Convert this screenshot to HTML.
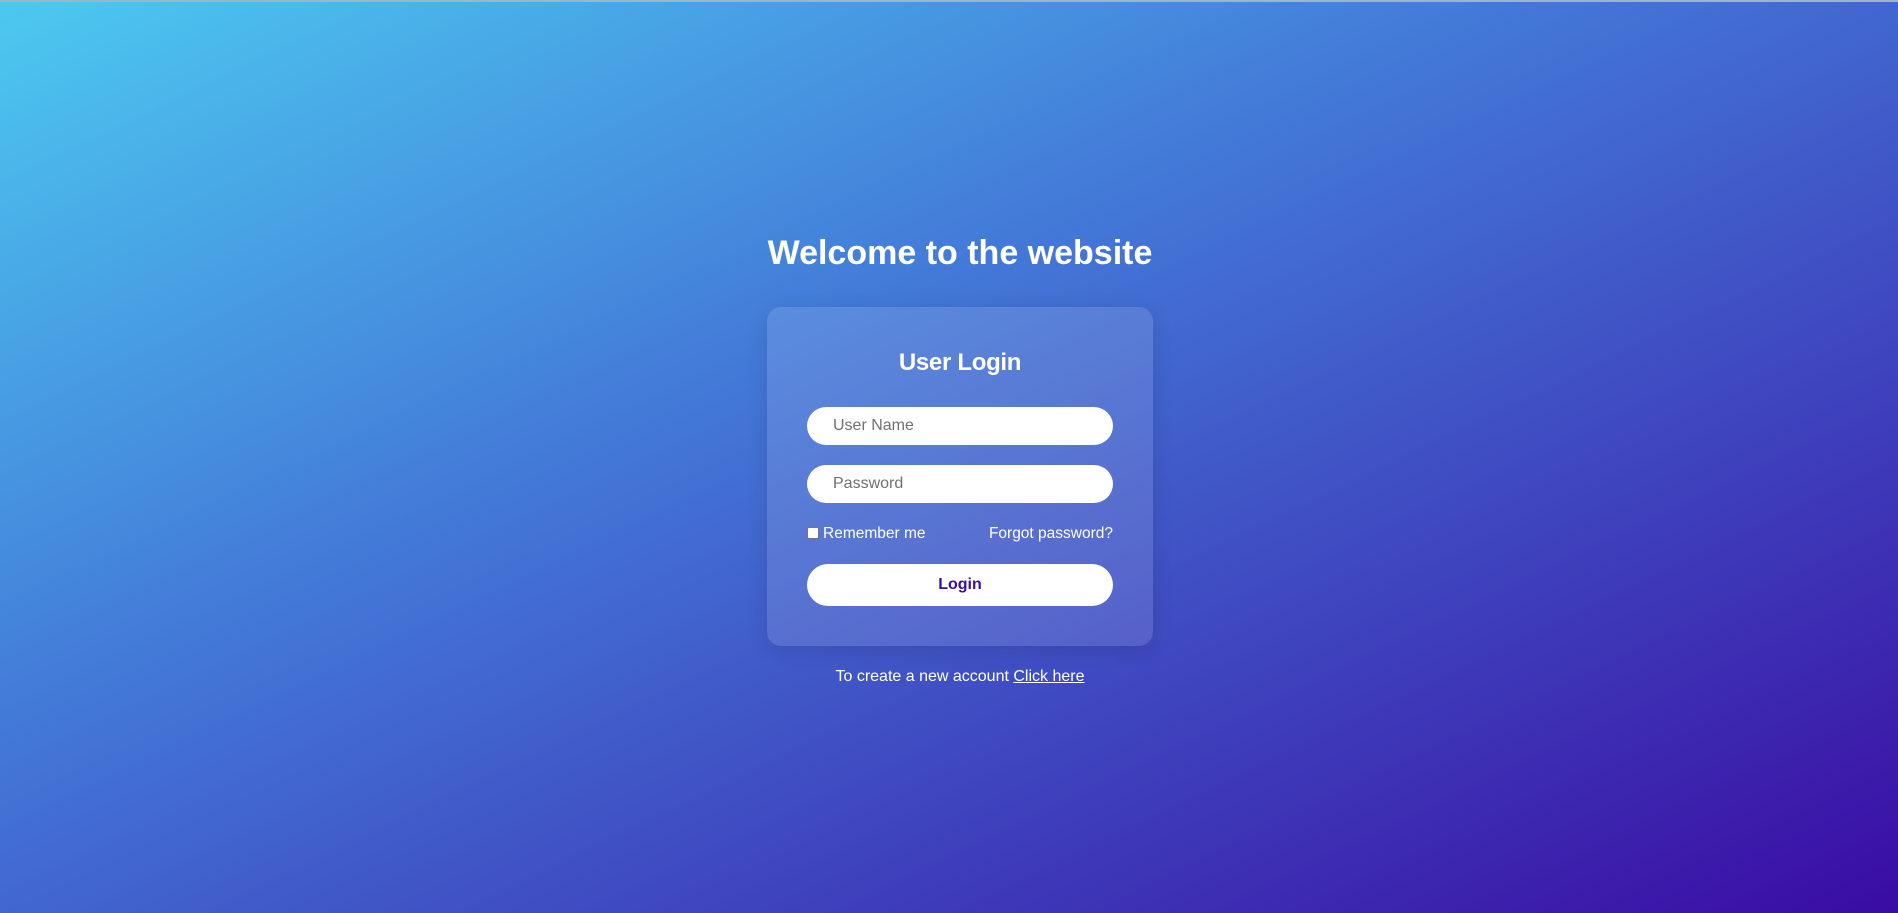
<!DOCTYPE html>
<html><head><meta charset="utf-8"><style>
html,body{margin:0;padding:0;width:1898px;height:913px;overflow:hidden}
body{background:linear-gradient(to bottom right,#4cc9f0,#4379d8 40%,#3a0ca3);border-top:2px solid #9ab8c4;box-sizing:border-box;font-family:"Liberation Sans",sans-serif;position:relative;color:#fff}
h1{position:absolute;left:700px;width:520px;top:232px;margin:0;text-align:center;font-size:34px;font-weight:bold;letter-spacing:0px}
.card{position:absolute;left:767px;top:305px;width:386px;height:339px;border-radius:14px;background:rgba(255,255,255,0.12);box-shadow:0 4px 20px rgba(0,0,0,0.12)}
h2{position:absolute;left:0;right:0;top:42px;margin:0;text-align:center;font-size:24px;font-weight:bold;letter-spacing:-0.3px}
.in{position:absolute;left:40px;width:306px;height:38px;border-radius:19px;background:#fff;color:#707070;font-size:16px;line-height:38px;box-sizing:border-box;padding-left:26px}
.row{position:absolute;left:40px;width:306px;top:217px;font-size:15.5px;height:20px;line-height:20px}
.cb{display:inline-block;width:12px;height:12px;background:#fff;border-radius:2px;border:1px solid #777;box-sizing:border-box;vertical-align:-1px;margin-right:4px}
.btn{position:absolute;left:40px;width:306px;top:257px;height:42px;border-radius:21px;background:#fff;color:#3a0ca3;font-weight:bold;font-size:16px;line-height:42px;text-align:center}
.foot{position:absolute;left:700px;width:520px;top:666px;text-align:center;font-size:16px}
.foot u{text-decoration:underline}
</style></head><body>
<h1>Welcome to the website</h1>
<div class="card">
<h2>User Login</h2>
<div class="in" style="top:100px">User Name</div>
<div class="in" style="top:158px">Password</div>
<div class="row"><span class="cb"></span>Remember me<span style="float:right">Forgot password?</span></div>
<div class="btn">Login</div>
</div>
<div class="foot">To create a new account <u>Click here</u></div>
</body></html>
